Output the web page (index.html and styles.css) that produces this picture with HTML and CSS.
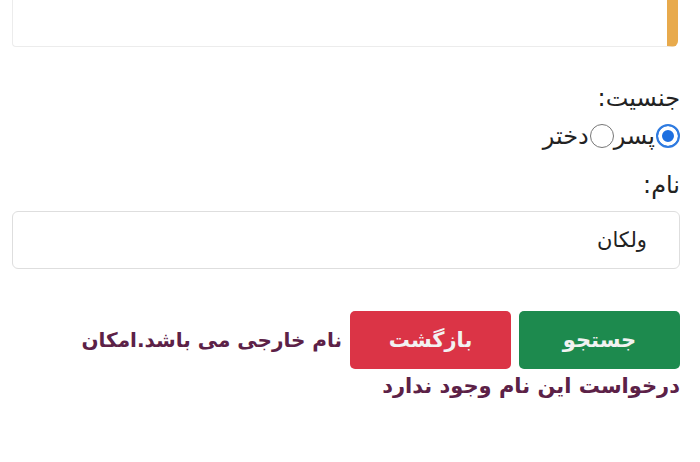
FILE: index.html
```html
<!DOCTYPE html>
<html lang="fa" dir="rtl">
<head>
	<meta charset="UTF-8">
	<title>فرم</title>
	<link rel="stylesheet" href="styles.css">
</head>
<body>
	<div id="wrap">
		<div class="noteBox"></div>
		<form id="form">
			<div class="fieldLabel">جنسیت:</div>
			<div class="radios">
				<label><input type="radio" name="sex" checked>پسر</label>
				<label><input type="radio" name="sex">دختر</label>
			</div>
			<label class="fieldLabel nameLabel" for="name">نام:</label>
			<input type="text" id="name" class="inputBox" value="ولکان">
			<div class="actions">
				<button type="submit" class="btn btnGreen">جستجو</button>
				<button type="button" class="btn btnRed">بازگشت</button>
				<span class="msg">نام خارجی می باشد.امکان</span>
			</div>
			<p class="msg msgRest">درخواست این نام وجود ندارد</p>
		</form>
	</div>
</body>
</html>
```

FILE: styles.css
```css
body {
	margin: 0;
	background: #fff;
	font: 22px/30px "DejaVu Sans", sans-serif;
	color: #222;
}
#wrap {
	padding: 0 20px 0 12px;
}
.noteBox {
	height: 48px;
	margin: -2px 2px 0 0;
	border: 1px solid #ececec;
	border-top: none;
	border-right: 11px solid #e8aa4c;
	border-radius: 0 0 6px 4px;
}
form {
	margin: 0;
	padding-top: 36px;
}
.fieldLabel {
	display: block;
	height: 30px;
	font-size: 24px;
}
.radios {
	display: flex;
	height: 34px;
	margin-top: 6px;
	align-items: center;
	font-size: 24px;
}
.radios label {
	display: flex;
	align-items: center;
}
.radios input {
	appearance: none;
	margin: 0 0 0 1px;
	width: 24px;
	height: 24px;
	border: 1px solid #777;
	border-radius: 50%;
	background: #fff;
}
.radios input:checked {
	border: 2px solid #2f7be0;
	background: #1d6fe0;
	box-shadow: inset 0 0 0 4px #fff;
}
.nameLabel {
	margin-top: 17px;
}
.inputBox {
	display: block;
	box-sizing: border-box;
	width: 100%;
	height: 58px;
	margin: 11px 0 0;
	padding: 0 32px;
	border: 1px solid #dedede;
	border-radius: 6px;
	font: 21px "DejaVu Sans", sans-serif;
	color: #222;
	outline: none;
	direction: rtl;
}
.actions {
	display: flex;
	align-items: center;
	gap: 8px;
	margin-top: 42px;
}
.btn {
	width: 161px;
	height: 58px;
	margin: 0;
	border: none;
	border-radius: 5px;
	font: bold 21px "DejaVu Sans", sans-serif;
	color: #f2f2f2;
}
.btnGreen {
	background: #1d8a4e;
}
.btnRed {
	background: #db3446;
}
.msg {
	color: #5c2147;
	font-size: 20px;
	font-weight: bold;
}
.msgRest {
	margin: 2px 0 0;
	line-height: 30px;
	font-size: 21px;
}
```
